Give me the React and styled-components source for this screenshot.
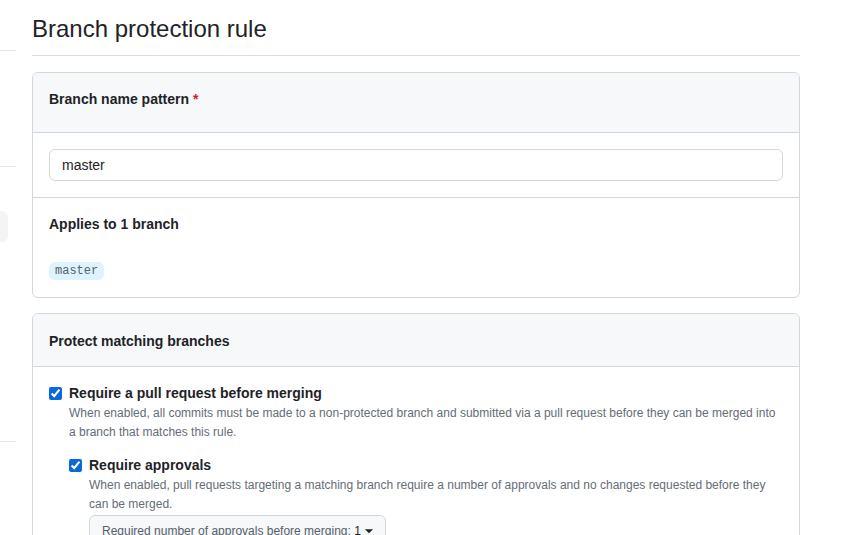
import React from "react";
import styled, { createGlobalStyle } from "styled-components";

const GlobalStyle = createGlobalStyle`
  html, body {
    margin: 0;
    padding: 0;
    background: #ffffff;
  }
  body {
    font-family: "Liberation Sans", Arial, sans-serif;
    color: #1f2328;
    overflow: hidden;
  }
`;

const Page = styled.div`
  display: flex;
  align-items: flex-start;
  width: 842px;
  height: 535px;
  overflow: hidden;
`;

const Sidebar = styled.nav`
  width: 16px;
  flex: none;
  display: flex;
  flex-direction: column;
`;

const SideGap = styled.div`
  height: ${(p) => p.$h}px;
`;

const SideDivider = styled.div`
  height: 1px;
  background: #e6e8eb;
`;

const SideActive = styled.div`
  width: 8px;
  height: 31px;
  background: #f3f4f6;
  border-radius: 0 6px 6px 0;
`;

const Main = styled.main`
  width: 768px;
  margin-left: 16px;
  padding-top: 11px;
`;

const Subhead = styled.div`
  padding-bottom: 8px;
  border-bottom: 1px solid #d8dee4;
  margin-bottom: 16px;
`;

const Title = styled.h2`
  margin: 0;
  font-size: 24px;
  line-height: 36px;
  font-weight: 400;
  color: #1f2328;
`;

const Box = styled.section`
  border: 1px solid #d0d7de;
  border-radius: 6px;
  margin-bottom: 15px;
  overflow: hidden;
`;

const BoxHeader = styled.div`
  background: #f6f8fa;
  border-bottom: 1px solid #d0d7de;
  padding: ${(p) => p.$pad};
`;

const BoxRow = styled.div`
  padding: ${(p) => p.$pad};
  & + & {
    border-top: 1px solid #d0d7de;
  }
`;

const Heading = styled.h3`
  margin: 0;
  font-size: 14px;
  line-height: 21px;
  font-weight: 700;
  color: #1f2328;
`;

const Required = styled.span`
  color: #cf222e;
  margin-left: 4px;
`;

const TextInput = styled.input`
  display: block;
  box-sizing: border-box;
  width: 100%;
  height: 32px;
  padding: 0 12px;
  border: 1px solid #d0d7de;
  border-radius: 6px;
  font-family: inherit;
  font-size: 14px;
  color: #1f2328;
  background: #ffffff;
  outline: none;
`;

const BranchChip = styled.code`
  display: inline-block;
  margin-top: 27px;
  padding: 0 6px;
  height: 18px;
  line-height: 18px;
  border-radius: 6px;
  background: #ddf4ff;
  color: #57606a;
  font-family: "Liberation Mono", "DejaVu Sans Mono", monospace;
  font-size: 12px;
`;

const Option = styled.div`
  display: grid;
  grid-template-columns: 20px 1fr;
  margin-left: ${(p) => (p.$nested ? 20 : 0)}px;
  margin-top: ${(p) => (p.$nested ? 13 : 0)}px;
`;

const Check = styled.input`
  width: 13px;
  height: 13px;
  margin: 4px 0 0 0;
  accent-color: #0969da;
`;

const OptionLabel = styled.div`
  font-size: 14px;
  line-height: 21px;
  font-weight: 700;
  color: #1f2328;
`;

const OptionNote = styled.p`
  grid-column: 2;
  margin: 0;
  font-size: 12px;
  line-height: 19px;
  color: #656d76;
`;

const SelectButton = styled.button`
  grid-column: 2;
  justify-self: start;
  display: inline-flex;
  align-items: center;
  gap: 3px;
  margin-top: 1px;
  height: 32px;
  padding: 0 11px 0 12px;
  border: 1px solid #d0d7de;
  border-radius: 6px;
  background: #f6f8fa;
  font-family: inherit;
  font-size: 12px;
  color: #1f2328;
  cursor: pointer;
`;

const SelectText = styled.span`
  color: #57606a;
`;

const SelectValue = styled.span`
  color: #1f2328;
`;

function Caret() {
  return (
    <svg width="10" height="10" viewBox="0 0 16 16" aria-hidden="true">
      <path d="M1.5 5h13L8 11.5z" fill="#1f2328" />
    </svg>
  );
}

export default function App() {
  return (
    <>
      <GlobalStyle />
      <Page>
        <Sidebar>
          <SideGap $h={50} />
          <SideDivider />
          <SideGap $h={115} />
          <SideDivider />
          <SideGap $h={44} />
          <SideActive />
          <SideGap $h={199} />
          <SideDivider />
        </Sidebar>
        <Main>
          <Subhead>
            <Title>Branch protection rule</Title>
          </Subhead>

          <Box>
            <BoxHeader $pad="16px 16px 22px">
              <Heading>
                Branch name pattern<Required>*</Required>
              </Heading>
            </BoxHeader>
            <BoxRow $pad="16px">
              <TextInput defaultValue="master" />
            </BoxRow>
            <BoxRow $pad="16px 16px 17px">
              <Heading>Applies to 1 branch</Heading>
              <BranchChip>master</BranchChip>
            </BoxRow>
          </Box>

          <Box>
            <BoxHeader $pad="17px 16px 14px">
              <Heading>Protect matching branches</Heading>
            </BoxHeader>
            <BoxRow $pad="16px 16px 16px">
              <Option>
                <Check type="checkbox" defaultChecked />
                <OptionLabel>Require a pull request before merging</OptionLabel>
                <OptionNote>
                  When enabled, all commits must be made to a non-protected
                  branch and submitted via a pull request before they can be
                  merged into a branch that matches this rule.
                </OptionNote>
              </Option>
              <Option $nested>
                <Check type="checkbox" defaultChecked />
                <OptionLabel>Require approvals</OptionLabel>
                <OptionNote>
                  When enabled, pull requests targeting a matching branch
                  require a number of approvals and no changes requested
                  before they can be merged.
                </OptionNote>
                <SelectButton type="button">
                  <SelectText>
                    Required number of approvals before merging:{" "}
                    <SelectValue>1</SelectValue>
                  </SelectText>
                  <Caret />
                </SelectButton>
              </Option>
            </BoxRow>
          </Box>
        </Main>
      </Page>
    </>
  );
}
